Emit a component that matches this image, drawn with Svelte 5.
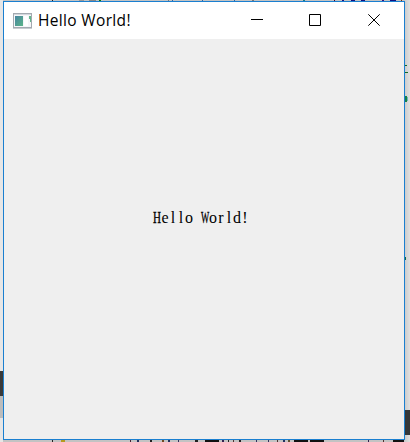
<script>
  const topMarks = [
    [52, 1, '#222'], [79, 5, '#999'], [89, 7, '#888'], [99, 2, '#0a7a0a'],
    [168, 1, '#777'], [172, 1, '#2b65a8'], [202, 1, '#2b65a8'], [234, 1, '#2b65a8'],
    [252, 2, '#777'], [303, 2, '#177d87'], [334, 1, '#400030'], [342, 2, '#171080'],
    [351, 4, '#101080'], [361, 4, '#101080'], [382, 2, '#301080'],
    [390, 6, '#101080'], [401, 1, '#703010']
  ];
  const bottomMarks = [
    [52, 1, '#222'], [61, 4, '#b49a20'], [130, 1, '#402030'], [137, 2, '#203060'],
    [150, 2, '#222'], [162, 2, '#704820'], [168, 2, '#203060'], [178, 1, '#303060'],
    [195, 3, '#222'], [205, 14, '#111'], [222, 2, '#302050'], [228, 1, '#222'],
    [233, 1, '#503030'], [239, 2, '#222'], [256, 1, '#303060'], [268, 1, '#303060'],
    [277, 1, '#503030'], [283, 2, '#203060'], [288, 2, '#605030'], [294, 14, '#111'],
    [310, 14, '#111'], [368, 1, '#302050'], [383, 1, '#503030'], [393, 11, '#111']
  ];
  const sideMarks = [
    [405, 65, 2, 1, '#116b25'], [405, 72, 3, 1, '#116b25'],
    [405, 96, 2, 6, '#16804a'], [407, 97, 1, 4, '#65b8b8'],
    [405, 257, 1, 3, '#116b45'],
    [0, 371, 3, 25, '#393939'], [0, 396, 3, 22, '#bcbcbc'],
    [405, 410, 5, 25, '#343739']
  ];
  const greeting = [...'Hello World!'];
  const widths = { H: 0.69, W: 0.54 };
</script>

<main class="desktop">
  {#each topMarks as [x, w, color]}
    <i style="left:{x}px;top:0;width:{w}px;height:1px;background:{color}"></i>
  {/each}
  {#each bottomMarks as [x, w, color]}
    <i style="left:{x}px;top:440px;width:{w}px;height:2px;background:{color}"></i>
  {/each}
  {#each sideMarks as [x, y, w, h, color]}
    <i style="left:{x}px;top:{y}px;width:{w}px;height:{h}px;background:{color}"></i>
  {/each}

  <section class="window">
    <header>
      <svg class="app-icon" width="20" height="16" viewBox="0 0 20 16">
        <defs>
          <linearGradient id="screen" x1="0" y1="0" x2="1" y2="1">
            <stop offset="0" stop-color="#4684a0" />
            <stop offset="1" stop-color="#5bb488" />
          </linearGradient>
        </defs>
        <rect x=".5" y=".5" width="18" height="14" fill="#f5f6f8" stroke="#a3a9b0" />
        <path d="M1 1.5H18" stroke="#d3d7dc" />
        <rect x="2" y="3" width="8" height="10" fill="url(#screen)" />
        <rect x="11" y="3" width="4" height="10" fill="#fff" />
        <path d="M16 3h2v6h-1V6h-1z" fill="#63b68d" />
        <path d="M0 15.5H19" stroke="#c8ccd0" />
      </svg>
      <h1>Hello World!</h1>
      <nav>
        <button aria-label="Minimize"><svg width="12" height="12" viewBox="0 0 12 12"><path d="M0 5.5H12" /></svg></button>
        <button aria-label="Maximize"><svg width="12" height="12" viewBox="0 0 12 12"><path d="M.5.5h11v11H.5z" /></svg></button>
        <button class="close" aria-label="Close"><svg width="12" height="12" viewBox="0 0 12 12"><path d="M.3.3l11.4 11.4M11.7.3L.3 11.7" /></svg></button>
      </nav>
    </header>
    <div class="content">
      <p>{#each greeting as letter}<span class:capital={letter in widths} style="transform:scaleX({widths[letter] ?? 1})">{letter}</span>{/each}</p>
    </div>
  </section>
</main>

<style>
  :global(body) { margin: 0; overflow: hidden; }
  .desktop {
    position: relative;
    box-sizing: border-box;
    width: 410px;
    height: 442px;
    padding: 1px 5px 2px 3px;
    overflow: hidden;
    background: linear-gradient(90deg, #e6e6e6 0 3px, #c3c3c3 3px 404px, #cccccc 405px, #e0e0e0 410px);
  }
  i { position: absolute; }
  .window {
    display: flex;
    flex-direction: column;
    box-sizing: border-box;
    width: 402px;
    height: 439px;
    border: 1px solid #1a7fd0;
    background: #efefef;
  }
  header {
    display: flex;
    align-items: center;
    height: 37px;
    padding-left: 9px;
    background: #fff;
  }
  .app-icon { display: block; flex: none; }
  h1 {
    margin: 0 0 2px 5px;
    font: 400 15.5px/22px "Open Sans", sans-serif;
    letter-spacing: .34px;
    white-space: nowrap;
    color: #000;
  }
  nav { display: flex; margin-left: auto; height: 36px; align-self: flex-start; }
  button {
    display: flex;
    align-items: center;
    justify-content: center;
    width: 58px;
    padding: 0;
    border: 0;
    background: transparent;
  }
  .close { width: 60px; }
  button svg { display: block; fill: none; stroke: #000; stroke-width: 1; }
  .content {
    display: flex;
    flex: 1;
    justify-content: flex-start;
    padding: 169px 0 0 149px;
  }
  p {
    display: flex;
    margin: 0;
    height: 20px;
    font: 400 16px/20px "Liberation Serif", serif;
    white-space: pre;
    color: #000;
  }
  span {
    display: flex;
    justify-content: center;
    width: 8px;
  }
  .capital { -webkit-text-stroke: .35px #000; }
</style>
